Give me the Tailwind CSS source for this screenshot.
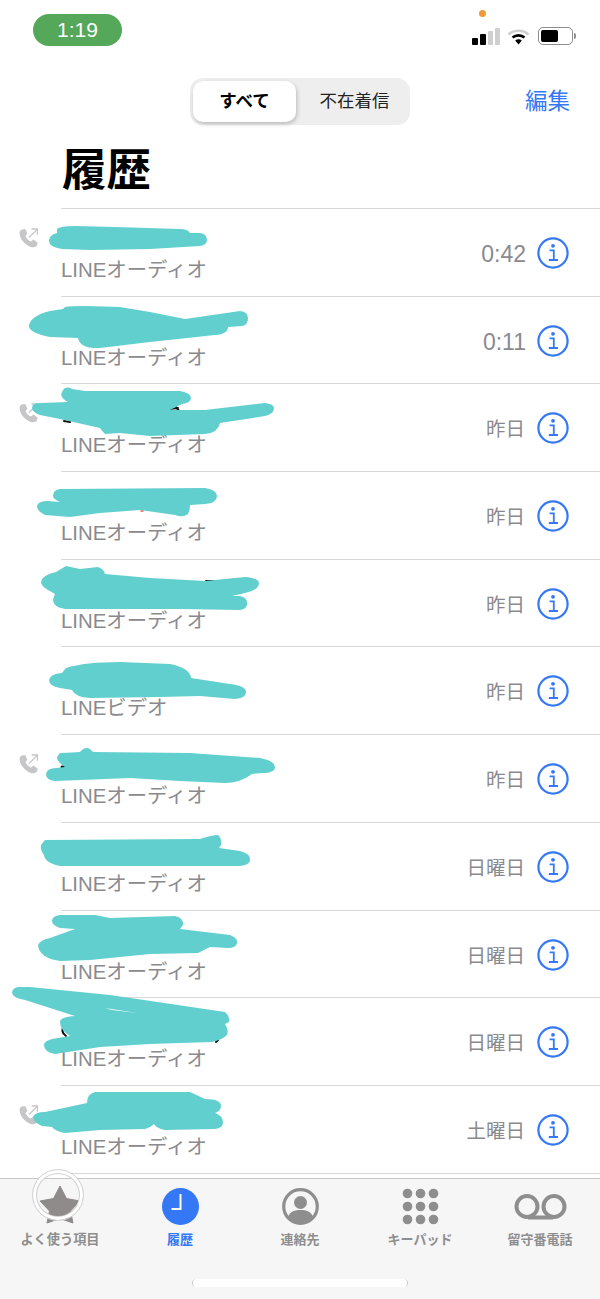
<!DOCTYPE html>
<html lang="ja">
<head>
<meta charset="UTF-8">
<meta name="viewport" content="width=device-width, initial-scale=1.0">
<title>履歴</title>
<script src="https://cdn.jsdelivr.net/npm/@tailwindcss/browser@4"></script>
</head>
<body class="bg-white">
<svg width="0" height="0" class="absolute">
  <symbol id="info" viewBox="0 0 32 32">
    <circle cx="16" cy="16" r="14.6" fill="none" stroke="#3478f6" stroke-width="2.2"/>
    <circle cx="16" cy="8.8" r="1.9" fill="#3478f6"/>
    <path d="M12.6 13.4H16.8V22.8M11.8 23H21" fill="none" stroke="#3478f6" stroke-width="1.8"/>
  </symbol>
  <symbol id="outgoing" viewBox="0 0 19 20">
    <path d="M3 1.6L6.2 1L8.4 5.8L6.4 8C7.5 10.6 9.5 12.6 12 13.6L14.4 11.6L18.6 14.6L18 17.6C16 20 12 20 8 17C3.5 14 0.6 9 0.6 5C0.6 3.2 1.5 2.1 3 1.6Z" fill="#c6c6c8"/>
    <path d="M10 9.5L18 1.6M12.6 1H18.4V6.8" fill="none" stroke="#c6c6c8" stroke-width="1.3"/>
  </symbol>
</svg>

<div class="relative w-[600px] h-[1299px] overflow-hidden flex flex-col font-['Liberation_Sans','Noto_Sans_CJK_JP',sans-serif]">
  <!-- status bar -->
  <div class="h-[78px] shrink-0 flex items-start justify-between pl-[33px] pr-[24px]">
    <div class="mt-[14px] w-[89px] h-[32px] rounded-full bg-[#55a75a] text-white text-[21px] leading-[32px] text-center">1:19</div>
    <div class="relative flex items-center gap-[7px] mt-[27px] h-[18px]">
      <span class="absolute left-[7px] -top-[17px] w-[7px] h-[7px] rounded-full bg-[#f09a37]"></span>
      <div class="flex items-end gap-[2px] h-[17px]">
        <span class="w-[6px] h-[7px] rounded-[1px] bg-black"></span>
        <span class="w-[6px] h-[11px] rounded-[1px] bg-black"></span>
        <span class="w-[5px] h-[14px] rounded-[1px] bg-[#cfcfcf]"></span>
        <span class="w-[5px] h-[17px] rounded-[1px] bg-[#cfcfcf]"></span>
      </div>
      <svg width="23" height="17" viewBox="0 0 23 17">
        <path d="M1.5 6.5C7 1.5 16 1.5 21.5 6.5" fill="none" stroke="#cfcfcf" stroke-width="2.6"/>
        <path d="M5.5 9.5C8.8 6.6 14.2 6.6 17.5 9.5" fill="none" stroke="#000" stroke-width="2.6"/>
        <path d="M8.2 12.4L11.5 16.5L14.8 12.4C13 10.9 10 10.9 8.2 12.4Z" fill="#000"/>
      </svg>
      <div class="flex items-center ml-[1px]">
        <div class="w-[35px] h-[18px] rounded-[5px] border border-[#8e8e8e] p-[2px]"><div class="w-[17px] h-full rounded-[2px] bg-black"></div></div>
        <span class="ml-[1px] w-[2px] h-[6px] rounded-r-full bg-[#8e8e8e]"></span>
      </div>
    </div>
  </div>

  <!-- segmented control and edit -->
  <div class="relative h-[47px] shrink-0">
    <div class="absolute left-[190px] top-0 w-[220px] h-[47px] rounded-[13px] bg-[#eeeeee] flex p-[3px]">
      <div class="w-[103px] h-[41px] rounded-[10px] bg-white shadow-[1px_2px_4px_rgba(0,0,0,0.22)] text-[17.5px] font-bold leading-[41px] text-center text-black">すべて</div>
      <div class="flex-1 pl-[6px] text-[17.5px] leading-[41px] text-center text-[#222]">不在着信</div>
    </div>
    <div class="absolute left-[525px] top-[10px] text-[22.5px] leading-[28px] text-[#3478f6]">編集</div>
  </div>

  <!-- title -->
  <div class="h-[84px] shrink-0 pl-[62px] pt-[19px] text-[44.5px] leading-[54px] font-bold text-black">履歴</div>

  <!-- call list -->
  <div class="flex flex-col shrink-0 -mt-[1px]">
    <div class="flex h-[87.7px]"><div class="w-[61px] pt-[20px] pl-[19px]"><svg width="19" height="20"><use href="#outgoing"/></svg></div><div class="flex-1 flex border-t border-[#d8d8da]"><div class="flex-1 pt-[48px] text-[20.4px] leading-[26px] text-[#8a8a8e]">LINEオーディオ</div><div class="pt-[31px] pr-[11px] text-[23px] leading-[28px] text-[#8a8a8e]">0:42</div><svg width="32" height="32" class="mt-[28px] mr-[31px]"><use href="#info"/></svg></div></div>
    <div class="flex h-[87.7px]"><div class="w-[61px]"></div><div class="flex-1 flex border-t border-[#d8d8da]"><div class="flex-1 pt-[48px] text-[20.4px] leading-[26px] text-[#8a8a8e]">LINEオーディオ</div><div class="pt-[31px] pr-[11px] text-[23px] leading-[28px] text-[#8a8a8e]">0:11</div><svg width="32" height="32" class="mt-[28px] mr-[31px]"><use href="#info"/></svg></div></div>
    <div class="flex h-[87.7px]"><div class="w-[61px] pt-[20px] pl-[19px]"><svg width="19" height="20"><use href="#outgoing"/></svg></div><div class="flex-1 flex border-t border-[#d8d8da]"><div class="flex-1 pt-[48px] text-[20.4px] leading-[26px] text-[#8a8a8e]">LINEオーディオ</div><div class="pt-[31px] pr-[12px] text-[19.5px] leading-[28px] text-[#8a8a8e]">昨日</div><svg width="32" height="32" class="mt-[28px] mr-[31px]"><use href="#info"/></svg></div></div>
    <div class="flex h-[87.7px]"><div class="w-[61px]"></div><div class="flex-1 flex border-t border-[#d8d8da]"><div class="flex-1 pt-[48px] text-[20.4px] leading-[26px] text-[#8a8a8e]">LINEオーディオ</div><div class="pt-[31px] pr-[12px] text-[19.5px] leading-[28px] text-[#8a8a8e]">昨日</div><svg width="32" height="32" class="mt-[28px] mr-[31px]"><use href="#info"/></svg></div></div>
    <div class="flex h-[87.7px]"><div class="w-[61px]"></div><div class="flex-1 flex border-t border-[#d8d8da]"><div class="flex-1 pt-[48px] text-[20.4px] leading-[26px] text-[#8a8a8e]">LINEオーディオ</div><div class="pt-[31px] pr-[12px] text-[19.5px] leading-[28px] text-[#8a8a8e]">昨日</div><svg width="32" height="32" class="mt-[28px] mr-[31px]"><use href="#info"/></svg></div></div>
    <div class="flex h-[87.7px]"><div class="w-[61px]"></div><div class="flex-1 flex border-t border-[#d8d8da]"><div class="flex-1 pt-[48px] text-[20.4px] leading-[26px] text-[#8a8a8e]">LINEビデオ</div><div class="pt-[31px] pr-[12px] text-[19.5px] leading-[28px] text-[#8a8a8e]">昨日</div><svg width="32" height="32" class="mt-[28px] mr-[31px]"><use href="#info"/></svg></div></div>
    <div class="flex h-[87.7px]"><div class="w-[61px] pt-[20px] pl-[19px]"><svg width="19" height="20"><use href="#outgoing"/></svg></div><div class="flex-1 flex border-t border-[#d8d8da]"><div class="flex-1 pt-[48px] text-[20.4px] leading-[26px] text-[#8a8a8e]">LINEオーディオ</div><div class="pt-[31px] pr-[12px] text-[19.5px] leading-[28px] text-[#8a8a8e]">昨日</div><svg width="32" height="32" class="mt-[28px] mr-[31px]"><use href="#info"/></svg></div></div>
    <div class="flex h-[87.7px]"><div class="w-[61px]"></div><div class="flex-1 flex border-t border-[#d8d8da]"><div class="flex-1 pt-[48px] text-[20.4px] leading-[26px] text-[#8a8a8e]">LINEオーディオ</div><div class="pt-[31px] pr-[12px] text-[19.5px] leading-[28px] text-[#8a8a8e]">日曜日</div><svg width="32" height="32" class="mt-[28px] mr-[31px]"><use href="#info"/></svg></div></div>
    <div class="flex h-[87.7px]"><div class="w-[61px]"></div><div class="flex-1 flex border-t border-[#d8d8da]"><div class="flex-1 pt-[48px] text-[20.4px] leading-[26px] text-[#8a8a8e]">LINEオーディオ</div><div class="pt-[31px] pr-[12px] text-[19.5px] leading-[28px] text-[#8a8a8e]">日曜日</div><svg width="32" height="32" class="mt-[28px] mr-[31px]"><use href="#info"/></svg></div></div>
    <div class="flex h-[87.7px]"><div class="w-[61px]"></div><div class="flex-1 flex border-t border-[#d8d8da]"><div class="flex-1 pt-[48px] text-[20.4px] leading-[26px] text-[#8a8a8e]">LINEオーディオ</div><div class="pt-[31px] pr-[12px] text-[19.5px] leading-[28px] text-[#8a8a8e]">日曜日</div><svg width="32" height="32" class="mt-[28px] mr-[31px]"><use href="#info"/></svg></div></div>
    <div class="flex h-[87.7px]"><div class="w-[61px] pt-[20px] pl-[19px]"><svg width="19" height="20"><use href="#outgoing"/></svg></div><div class="flex-1 flex border-t border-[#d8d8da]"><div class="flex-1 pt-[48px] text-[20.4px] leading-[26px] text-[#8a8a8e]">LINEオーディオ</div><div class="pt-[31px] pr-[12px] text-[19.5px] leading-[28px] text-[#8a8a8e]">土曜日</div><svg width="32" height="32" class="mt-[28px] mr-[31px]"><use href="#info"/></svg></div></div>
    <div class="ml-[61px] h-[5px] border-t border-[#d8d8da]"></div>
  </div>

  <!-- tab bar -->
  <div class="relative flex-1 bg-[#f6f6f6] border-t border-[#c9c9c9]">
    <div class="flex h-[80px]">
      <div class="w-[120px] flex flex-col items-center pt-[7px]">
        <svg width="40" height="38" viewBox="0 0 40 38"><path d="M20 0L26.5 12.5L40 15L30.5 25L33 37L20 32.5L7 37L9.5 25L0 15L13.5 12.5Z" fill="#8f8b8b" stroke="#8f8b8b" stroke-linejoin="round"/></svg>
        <div class="mt-[7px] text-[13.2px] leading-[18px] font-bold text-[#8e8e8e]">よく使う項目</div>
      </div>
      <div class="w-[120px] flex flex-col items-center pt-[9px]">
        <svg width="37" height="37" viewBox="0 0 37 37"><circle cx="18.5" cy="18.5" r="18.5" fill="#3478f6"/><path d="M18.5 6V21H9.5" fill="none" stroke="#fff" stroke-width="2"/></svg>
        <div class="mt-[6px] text-[13px] leading-[18px] font-bold text-[#3478f6]">履歴</div>
      </div>
      <div class="w-[120px] flex flex-col items-center pt-[9px]">
        <svg width="37" height="37" viewBox="0 0 37 37"><circle cx="18.5" cy="18.5" r="16.8" fill="#f6f6f6" stroke="#8e8e8e" stroke-width="3.2"/><circle cx="18.5" cy="14.5" r="6.5" fill="#8e8e8e"/><path d="M6 29C8 23 13 22 18.5 22C24 22 29 23 31 29C25 36 12 36 6 29Z" fill="#8e8e8e"/></svg>
        <div class="mt-[6px] text-[13px] leading-[18px] font-bold text-[#8e8e8e]">連絡先</div>
      </div>
      <div class="w-[120px] flex flex-col items-center pt-[9px]">
        <svg width="37" height="37" viewBox="0 0 37 37" fill="#8e8e8e"><circle cx="5.5" cy="5.5" r="4.8"/><circle cx="18.5" cy="5.5" r="4.8"/><circle cx="31.5" cy="5.5" r="4.8"/><circle cx="5.5" cy="18.5" r="4.8"/><circle cx="18.5" cy="18.5" r="4.8"/><circle cx="31.5" cy="18.5" r="4.8"/><circle cx="5.5" cy="31.5" r="4.8"/><circle cx="18.5" cy="31.5" r="4.8"/><circle cx="31.5" cy="31.5" r="4.8"/></svg>
        <div class="mt-[6px] text-[13px] leading-[18px] font-bold text-[#8e8e8e]">キーパッド</div>
      </div>
      <div class="w-[120px] flex flex-col items-center pt-[9px]">
        <svg width="55" height="37" viewBox="0 0 55 37"><path d="M15 29.5H40" stroke="#8e8e8e" stroke-width="4" fill="none"/><circle cx="14" cy="18.5" r="10.5" fill="none" stroke="#8e8e8e" stroke-width="4"/><circle cx="41" cy="18.5" r="10.5" fill="none" stroke="#8e8e8e" stroke-width="4"/></svg>
        <div class="mt-[6px] text-[13px] leading-[18px] font-bold text-[#8e8e8e]">留守番電話</div>
      </div>
    </div>
    <!-- home indicator -->
    <div class="absolute left-[192px] top-[100px] w-[216px] h-[8px] rounded-full bg-white border-x border-[#cfcfcf]"></div>
  </div>

  <!-- floating ring over the favourites tab -->
  <div class="absolute left-[32px] top-[1169px] w-[52px] h-[52px] rounded-full border border-[#d4d4d4] shadow-[inset_0_0_0_3px_#ffffff,inset_0_0_0_4px_#d0d0d0]"></div>

  <!-- hand drawn redaction over the names -->
  <svg class="absolute left-0 top-0" width="600" height="1299" viewBox="0 0 600 1299">
    <g fill="none" stroke-linecap="round">
      <path d="M64 421L70 422M160 410L178 408M175 406L180 412" stroke="#111" stroke-width="2"/>
      <path d="M64 502H75M141 511H143" stroke="#ea5a4a" stroke-width="1.5"/>
      <path d="M206 581L218 581" stroke="#111" stroke-width="2"/>
      <path d="M62 767H71" stroke="#111" stroke-width="3"/>
      <path d="M64 1026Q60 1032 66 1036M218 1040L216 1042" stroke="#111" stroke-width="2"/>
    </g>
    <g fill="#62cfcf">
      <path d="M57 229Q60 226 75 226L115 227L180 229Q188 229 190 233L200 233Q207 234 207 240Q207 245 200 246L150 249L90 250L62 249Q49 247 49 241Q49 235 57 233Z"/>
      <path d="M65 307Q70 306 85 306L120 307L150 312L185 319L240 311Q248 312 248 318Q248 325 242 326L228 327Q228 334 215 335L150 342L100 348Q80 349 78 338L50 337Q29 333 29 326Q30 316 50 311L63 309Z"/>
      <path d="M62 392Q65 385 72 389L85 391L180 391Q191 393 191 398Q191 403 182 404L170 410L205 410L265 403Q274 404 274 408Q274 414 265 416L220 423Q218 433 205 434L150 436L120 433L105 434Q102 431 100 428L60 419L40 415Q32 412 32 408Q32 403 40 403L68 402Q59 397 62 392Z"/>
      <path d="M60 489L205 488Q217 490 217 496Q217 503 205 504L190 505Q190 510 188 514Q183 518 175 515L140 510L100 513L70 517L45 515Q37 511 37 506Q38 501 48 501L60 502Q53 499 53 496Q53 490 60 489Z"/>
      <path d="M66 566L80 569L98 567Q104 569 105 574L150 578L205 581L245 577Q258 578 259 583Q259 590 245 593L232 596L240 596Q248 598 247 604Q247 609 240 610L180 609L65 609Q53 607 53 600Q54 596 55 594L48 590Q41 586 41 582Q42 575 56 572Z"/>
      <path d="M66 668Q85 662 120 662L170 664Q190 668 191 678L230 684Q246 686 246 692Q246 698 235 699L200 696L160 697L90 698Q75 697 72 690L60 688Q49 686 49 680Q50 674 62 673Z"/>
      <path d="M60 753Q62 753 80 752Q85 746 90 749L93 752L190 753L260 758Q275 761 275 767Q275 773 262 773L252 774Q240 783 225 783L180 781L130 778L55 781Q46 780 46 774Q47 768 56 768L65 767Q57 762 57 757Z"/>
      <path d="M45 840L200 839Q212 835 218 835Q222 838 221 845L219 848L240 851Q251 854 250 860Q250 865 240 866L60 866Q45 863 44 855Q40 850 41 845Z"/>
      <path d="M60 915L95 915L110 918L175 916Q184 918 183 925L180 929L230 935Q238 938 237 943Q236 948 228 948L210 947L198 953L150 954L90 960L60 961Q39 958 38 945Q40 940 50 938L75 929L60 928Q52 925 52 921Q52 916 60 915Z"/>
      <path d="M18 987L30 987L110 995L225 1012Q230 1016 229 1022L225 1024Q229 1030 227 1035Q222 1040 212 1042L150 1044L100 1047L55 1054Q44 1052 44 1045Q44 1041 52 1039L70 1036Q60 1030 60 1022Q60 1017 75 1016L25 1000Q12 998 12 992Q13 988 18 987Z"/>
      <path d="M95 1092L190 1092L205 1099Q221 1099 221 1106Q221 1111 215 1113Q223 1116 223 1122Q223 1128 215 1129L165 1130Q156 1128 154 1124Q150 1128 145 1129L100 1130L65 1133Q55 1131 52 1127L42 1126Q33 1122 33 1117Q35 1112 45 1112L87 1103Q87 1094 95 1092Z"/>
    </g>
    <path d="M105 1008L137 1013L112 1010Z" fill="#fff"/>
  </svg>
</div>
</body>
</html>
